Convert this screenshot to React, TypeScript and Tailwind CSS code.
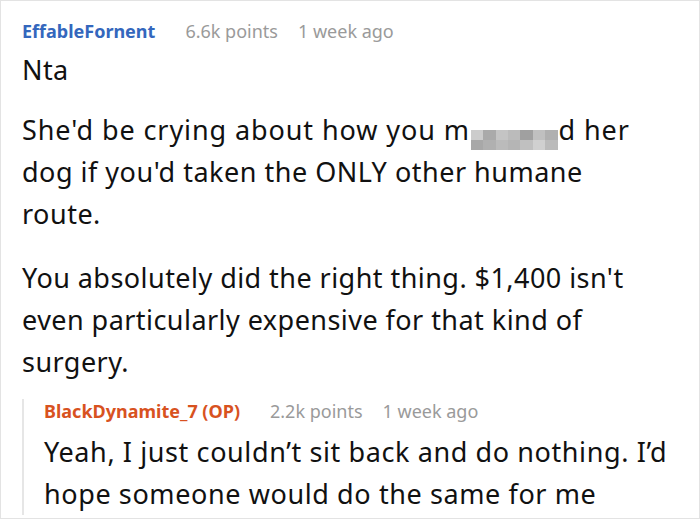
import React from 'react';

const blurRows = [
  ['#cccccc', '#aaaaaa', '#c4c4c4', '#bbbbbb', '#a0a0a0', '#c0c0c0', '#b0b0b0'],
  ['#a8a8a8', '#b0b0b0', '#bbbbbb', '#b5b5b5', '#c0c0c0', '#d0d0d0', '#bbbbbb'],
];

function Censored() {
  return (
    <span className="inline-flex flex-col align-baseline mx-[1px]">
      {blurRows.map((row, i) => (
        <span key={i} className="flex">
          {row.map((c, j) => (
            <span key={j} style={{ backgroundColor: c }} className="block w-[12.4px] h-[10px]" />
          ))}
        </span>
      ))}
    </span>
  );
}

function Meta({ name, color, points }: { name: string; color: string; points: string }) {
  return (
    <div className="flex items-center text-[18px] leading-[24px] whitespace-nowrap">
      <span className={`font-bold ${color}`}>{name}</span>
      <span className="ml-[30px] text-[#9a9a9a]">{points}</span>
      <span className="ml-[20px] text-[#9a9a9a]">1 week ago</span>
    </div>
  );
}

export default function App() {
  return (
    <div
      className="w-[700px] h-[519px] bg-white border border-[#e3e3e3] overflow-hidden text-[#111]"
      style={{ fontFamily: '"Noto Sans", "Open Sans", sans-serif' }}
    >
      <div className="pl-[21px] pt-[18px]">
        <Meta name="EffableFornent" color="text-[#3467bd]" points="6.6k points" />
        <div className="text-[27px] leading-[42px] whitespace-nowrap">
          <p className="mt-[6px] tracking-[0.4px]">Nta</p>
          <p className="mt-[18px] tracking-[0.5px]">
            <span className="tracking-[0.9px]">
              She'd be crying about how you m<Censored />d her
            </span>
            <br />
            dog if you'd taken the ONLY other humane
            <br />
            route.
          </p>
          <p className="mt-[22px] tracking-[0.45px]">
            You absolutely did the right thing. $1,400 isn't
            <br />
            even particularly expensive for that kind of
            <br />
            surgery.
          </p>
        </div>
        <div className="mt-[16px] border-l-2 border-[#e6e6e6] pl-[20px]">
          <Meta name="BlackDynamite_7 (OP)" color="text-[#d8521f]" points="2.2k points" />
          <p className="mt-[8px] text-[27px] leading-[42px] tracking-[0.6px] whitespace-nowrap">
            Yeah, I just couldn’t sit back and do nothing. I’d
            <br />
            hope someone would do the same for me
          </p>
        </div>
      </div>
    </div>
  );
}
